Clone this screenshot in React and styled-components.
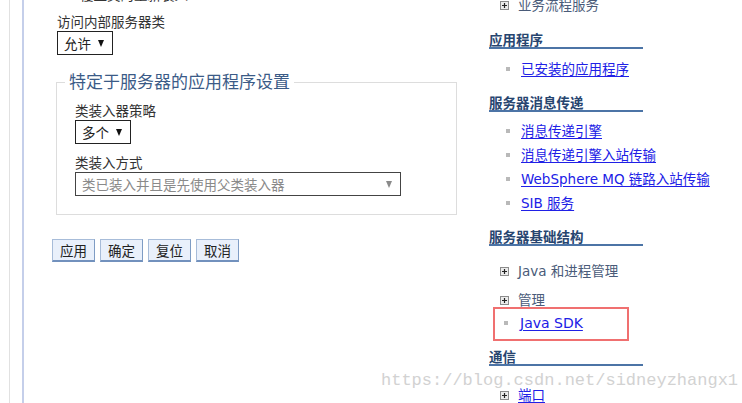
import React from "react";
import styled, { createGlobalStyle } from "styled-components";

const Global = createGlobalStyle`
  html, body { margin: 0; padding: 0; background: #fff; }
  body {
    font-family: "DejaVu Sans", "Noto Sans CJK SC", sans-serif;
    font-size: 13.5px;
    color: #333;
    overflow: hidden;
  }
`;

const Page = styled.div`
  position: relative;
  width: 742px;
  height: 403px;
  overflow: hidden;
  display: flex;
`;

const LeftPane = styled.div`
  width: 479px;
  margin-left: 9px;
  border-left: 1px solid #e1e1e1;
  display: flex;
`;

const ContentArea = styled.div`
  flex: 1;
  margin-left: 12px;
  border-left: 2px solid #c5cfea;
  padding-left: 33px;
  display: flex;
  flex-direction: column;
  align-items: flex-start;
`;

const CutLine = styled.div`
  margin-top: -14px;
  padding-left: 23px;
  line-height: 18px;
  color: #333;
`;

const Label = styled.div`
  margin-top: ${(p) => p.$mt || 0}px;
  line-height: 17px;
  color: #333;
  white-space: nowrap;
`;

const Select = styled.div`
  box-sizing: border-box;
  width: ${(p) => p.$w}px;
  height: 24px;
  border: 1px solid ${(p) => (p.$disabled ? "#444" : "#222")};
  background: #fff;
  display: flex;
  align-items: center;
  justify-content: space-between;
  padding: 0 8px 0 6px;
  color: ${(p) => (p.$disabled ? "#8a8a8a" : "#222")};
  white-space: nowrap;
`;

const Arrow = styled.span`
  width: 0;
  height: 0;
  border-left: 3.5px solid transparent;
  border-right: 3.5px solid transparent;
  border-top: 7px solid ${(p) => (p.$disabled ? "#8a8a8a" : "#111")};
  margin-top: 1px;
`;

const Group = styled.fieldset`
  box-sizing: border-box;
  width: 401px;
  margin: 17px 0 0 -1px;
  padding: 11px 0 18px 18px;
  border: 1px solid #dddddd;
  display: flex;
  flex-direction: column;
  align-items: flex-start;
  min-width: 0;
`;

const Legend = styled.legend`
  margin-left: -10px;
  padding: 0 4px;
  font-size: 17px;
  line-height: 20px;
  color: #3b5b87;
`;

const ButtonRow = styled.div`
  margin: 24px 0 0 -5px;
  display: flex;
  gap: 5px;
`;

const Button = styled.button`
  box-sizing: border-box;
  width: 43px;
  height: 23px;
  padding: 0;
  font-family: "Noto Sans CJK SC", sans-serif;
  font-size: 13.5px;
  color: #222;
  background: #e9f0fb;
  border: 1px solid #a7bcd9;
  border-right-color: #7e9cc4;
  border-bottom: 2px solid #7291bd;
  line-height: 19px;
`;

const RightPane = styled.div`
  flex: 1;
  display: flex;
  flex-direction: column;
  align-items: flex-start;
`;

const TreeItem = styled.div`
  margin-top: ${(p) => p.$mt}px;
  padding-left: 11px;
  display: flex;
  align-items: center;
  gap: 9px;
  line-height: 16px;
  color: #4a5b79;
  white-space: nowrap;
`;

const Heading = styled.div`
  margin-top: ${(p) => p.$mt}px;
  width: 154px;
  line-height: 16px;
  border-bottom: 2px solid #4c74a6;
  color: #27456f;
  font-weight: 600;
  font-family: "Noto Sans CJK SC", sans-serif;
`;

const List = styled.div`
  margin-top: ${(p) => p.$mt}px;
  display: flex;
  flex-direction: column;
`;

const BulletItem = styled.div`
  display: flex;
  align-items: center;
  line-height: ${(p) => p.$lh || 24}px;
  padding-left: ${(p) => p.$indent}px;
  white-space: nowrap;
`;

const Bullet = styled.span`
  width: 4px;
  height: 4px;
  background: #b9b9b9;
  margin-right: ${(p) => p.$gap}px;
`;

const Link = styled.a`
  color: #2020e6;
  text-decoration: underline;
  text-underline-offset: 2px;
  font-size: ${(p) => p.$latin ? "14px" : "inherit"};
`;

const Highlight = styled.div`
  box-sizing: border-box;
  margin: -1px 0 0 4px;
  width: 136px;
  height: 37px;
  border: 2px solid #f07070;
  padding-top: 6px;
`;

const Watermark = styled.div`
  position: absolute;
  left: 381px;
  top: 371px;
  font-family: "Liberation Mono", monospace;
  font-size: 17px;
  line-height: 20px;
  color: #d2d2d2;
  pointer-events: none;
  white-space: nowrap;
`;

const PlusBox = () => (
  <svg width="9" height="9" viewBox="0 0 9 9">
    <rect x="0.5" y="0.5" width="8" height="8" fill="#ececec" stroke="#8c8c8c" />
    <path d="M2 4.5h5M4.5 2v5" stroke="#222" strokeWidth="1.2" />
  </svg>
);

const messaging = [
  "消息传递引擎",
  "消息传递引擎入站传输",
  "WebSphere MQ 链路入站传输",
  "SIB 服务",
];

export default function App() {
  return (
    <>
      <Global />
      <Page>
        <LeftPane>
          <ContentArea>
            <CutLine>覆盖类的重新装入</CutLine>
            <Label $mt={10}>访问内部服务器类</Label>
            <Select $w={56}>
              <span>允许</span>
              <Arrow />
            </Select>
            <Group>
              <Legend>特定于服务器的应用程序设置</Legend>
              <Label>类装入器策略</Label>
              <Select $w={56}>
                <span>多个</span>
                <Arrow />
              </Select>
              <Label $mt={11}>类装入方式</Label>
              <Select $w={326} $disabled>
                <span>类已装入并且是先使用父类装入器</span>
                <Arrow $disabled />
              </Select>
            </Group>
            <ButtonRow>
              <Button>应用</Button>
              <Button>确定</Button>
              <Button>复位</Button>
              <Button>取消</Button>
            </ButtonRow>
          </ContentArea>
        </LeftPane>
        <RightPane>
          <TreeItem $mt={-3}>
            <PlusBox />
            <span>业务流程服务</span>
          </TreeItem>
          <Heading $mt={18}>应用程序</Heading>
          <List $mt={8}>
            <BulletItem $indent={17}>
              <Bullet $gap={11} />
              <Link>已安装的应用程序</Link>
            </BulletItem>
          </List>
          <Heading $mt={13}>服务器消息传递</Heading>
          <List $mt={7}>
            {messaging.map((m) => (
              <BulletItem key={m} $indent={17}>
                <Bullet $gap={11} />
                <Link>{m}</Link>
              </BulletItem>
            ))}
          </List>
          <Heading $mt={13}>服务器基础结构</Heading>
          <TreeItem $mt={17}>
            <PlusBox />
            <span>Java 和进程管理</span>
          </TreeItem>
          <TreeItem $mt={13}>
            <PlusBox />
            <span>管理</span>
          </TreeItem>
          <Highlight>
            <BulletItem $indent={9} $lh={16}>
              <Bullet $gap={12} />
              <Link $latin>Java SDK</Link>
            </BulletItem>
          </Highlight>
          <Heading $mt={7}>通信</Heading>
          <TreeItem $mt={21}>
            <PlusBox />
            <Link>端口</Link>
          </TreeItem>
        </RightPane>
        <Watermark>https://blog.csdn.net/sidneyzhangx1</Watermark>
      </Page>
    </>
  );
}
